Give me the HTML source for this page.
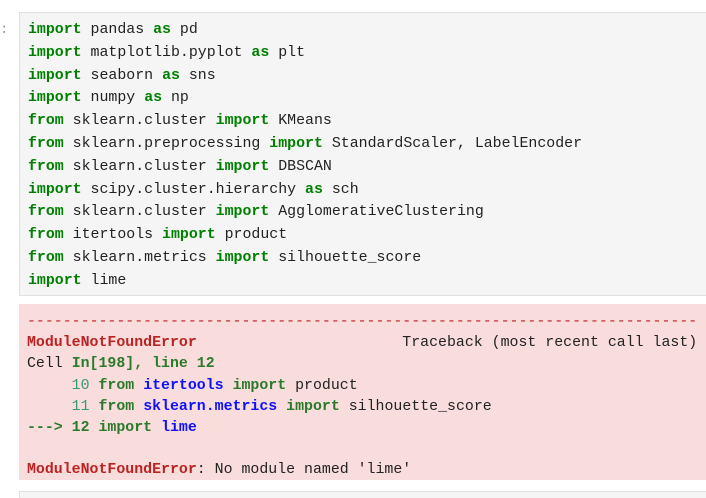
<!DOCTYPE html>
<html><head><style>
html,body{margin:0;padding:0;background:#fff;width:706px;height:498px;overflow:hidden}
body{position:relative;font-family:"Liberation Mono",monospace;font-size:14.9px}
.p{position:absolute;left:0;top:22px;color:#999;font-size:14px}
.code{position:absolute;left:19px;top:12px;width:700px;height:284px;background:#f5f5f5;border:1px solid #e0e0e0;box-sizing:border-box}
.code pre{margin:0;position:absolute;left:8px;top:6px;font:inherit;line-height:22.8px;color:#222;white-space:pre}
.k{color:#008000;font-weight:bold}
.err{position:absolute;left:19px;top:304px;width:700px;height:176px;background:#f9dddd}
.err pre{margin:0;position:absolute;left:8px;top:8px;font:inherit;line-height:21.2px;color:#222;white-space:pre}
.r{color:#b22;font-weight:bold}
.rd{color:#b22}
.g{color:#2a7a2a;font-weight:bold}
.n{color:#3a9a6a}
.b{color:#1010ff;font-weight:bold}
.next{position:absolute;left:19px;top:491px;width:700px;height:20px;background:#f5f5f5;border:1px solid #e0e0e0}
</style></head><body>
<div class="p">:</div>
<div class="code"><pre><span class="k">import</span> pandas <span class="k">as</span> pd
<span class="k">import</span> matplotlib.pyplot <span class="k">as</span> plt
<span class="k">import</span> seaborn <span class="k">as</span> sns
<span class="k">import</span> numpy <span class="k">as</span> np
<span class="k">from</span> sklearn.cluster <span class="k">import</span> KMeans
<span class="k">from</span> sklearn.preprocessing <span class="k">import</span> StandardScaler, LabelEncoder
<span class="k">from</span> sklearn.cluster <span class="k">import</span> DBSCAN
<span class="k">import</span> scipy.cluster.hierarchy <span class="k">as</span> sch
<span class="k">from</span> sklearn.cluster <span class="k">import</span> AgglomerativeClustering
<span class="k">from</span> itertools <span class="k">import</span> product
<span class="k">from</span> sklearn.metrics <span class="k">import</span> silhouette_score
<span class="k">import</span> lime</pre></div>
<div class="err"><pre><span class="rd">---------------------------------------------------------------------------</span>
<span class="r">ModuleNotFoundError</span>                       Traceback (most recent call last)
Cell <span class="g">In[198], line 12</span>
<span class="n">     10</span> <span class="g">from</span> <span class="b">itertools</span> <span class="g">import</span> product
<span class="n">     11</span> <span class="g">from</span> <span class="b">sklearn.metrics</span> <span class="g">import</span> silhouette_score
<span class="g">---&gt; 12</span> <span class="g">import</span> <span class="b">lime</span>

<span class="r">ModuleNotFoundError</span>: No module named 'lime'</pre></div>
<div class="next"></div>
</body></html>
